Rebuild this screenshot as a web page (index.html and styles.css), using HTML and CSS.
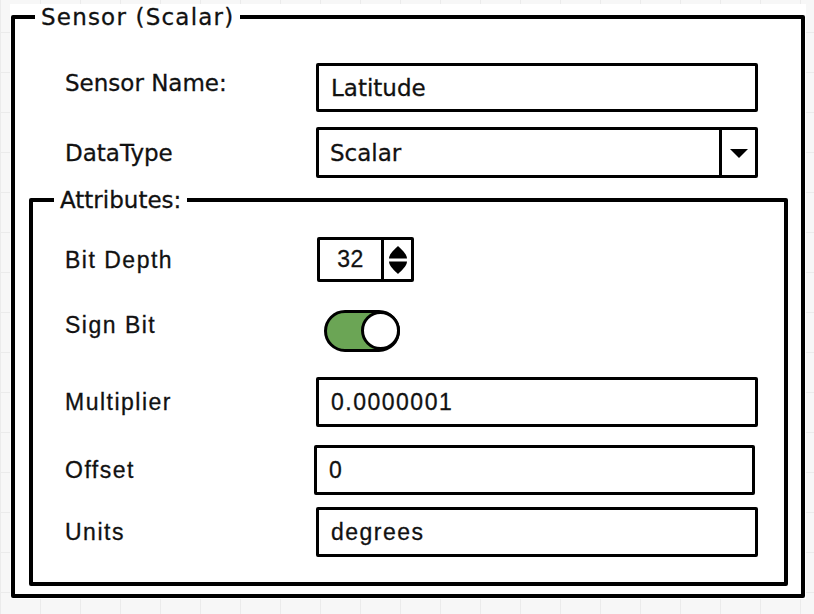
FILE: index.html
```html
<!DOCTYPE html>
<html lang="en">
<head>
  <meta charset="UTF-8" />
  <meta name="viewport" content="width=device-width, initial-scale=1" />
  <title>Sensor (Scalar)</title>
  <link rel="stylesheet" href="styles.css">
</head>
<body>

<div class="page">
  <div class="sheet">
    <fieldset class="group">
      <legend>Sensor (Scalar)</legend>

      <div class="fields">
        <div class="row name-row">
          <label class="sketch">Sensor Name:</label>
          <div class="input sketch">Latitude</div>
        </div>
        <div class="row type-row">
          <label class="sketch">DataType</label>
          <div class="select sketch">
            <span class="value">Scalar</span>
            <span class="caret"></span>
          </div>
        </div>
      </div>

      <fieldset class="group inner">
        <legend>Attributes:</legend>

        <div class="attrs">
          <div class="row spin-row">
            <label>Bit Depth</label>
            <div class="stepper">
              <span class="num">32</span>
              <span class="arrows">
                <svg width="20" height="30" viewBox="0 0 20 30">
                  <path d="M10 1 C13 4 19 9 19 13.5 L1 13.5 C1 9 7 4 10 1 Z" fill="#000"/>
                  <path d="M10 29 C13 26 19 21 19 16.5 L1 16.5 C1 21 7 26 10 29 Z" fill="#000"/>
                </svg>
              </span>
            </div>
          </div>

          <div class="row switch-row">
            <label>Sign Bit</label>
            <div class="toggle"><span class="knob"></span></div>
          </div>

          <div class="row mult-row">
            <label>Multiplier</label>
            <div class="input">0.0000001</div>
          </div>

          <div class="row offset-row">
            <label>Offset</label>
            <div class="input">0</div>
          </div>

          <div class="row units-row">
            <label>Units</label>
            <div class="input">degrees</div>
          </div>
        </div>
      </fieldset>
    </fieldset>
  </div>
</div>

</body>
</html>
```

FILE: styles.css
```css
* { box-sizing: border-box; }
html, body {
  margin: 0; padding: 0; min-height: 614px;
}
body {
  background-color: #f7f7f7;
  background-image:
    linear-gradient(#ebebeb 1px, transparent 1px),
    linear-gradient(90deg, #ebebeb 1px, transparent 1px);
  background-size: 40px 40px;
  background-position: 0 32px;
  color: #111;
  font-family: "Liberation Sans", Arial, sans-serif;
  font-size: 23px;
  letter-spacing: 1.5px;
  -webkit-text-stroke: 0.3px #111;
}
.page {
  padding: 4px 0 0 10px;
}
.sheet {
  width: 796px;
  height: 595px;
  background: #fff;
}

/* group boxes */
.group {
  margin: 0 0 0 1px;
  padding: 0;
  width: 794px;
  min-width: 0;
  border: 4px solid #000;
  border-radius: 2px;
}
.group > legend {
  margin-left: 20px;
  padding: 0 6px;
  font-family: "DejaVu Sans", sans-serif;
  font-size: 23px;
  line-height: 26px;
  letter-spacing: 1.2px;
}
.group.inner {
  width: auto;
  margin: 9px 13px 8px 14px;
}
.group.inner > legend {
  margin-left: 21px;
  letter-spacing: 0;
}

.fields {
  padding: 33px 43px 0 50px;
}
.attrs {
  padding: 24px 26px 25px 32px;
}

/* rows */
.row {
  display: grid;
  grid-template-columns: 251px 442px;
  align-items: center;
}
.row label {
  line-height: 26px;
}
.sketch {
  font-family: "DejaVu Sans", sans-serif;
  letter-spacing: 0;
}
.name-row { height: 49px; margin-bottom: 15px; }
.name-row label { align-self: start; margin-top: 7px; }
.type-row { height: 51px; }

.spin-row { height: 45px; margin-bottom: 26px; }
.switch-row { height: 45px; margin-bottom: 24px; }
.switch-row label { align-self: start; margin-top: 4px; }
.mult-row { height: 50px; margin-bottom: 18px; }
.offset-row { height: 50px; margin-bottom: 12px; }
.units-row { height: 50px; }

/* controls */
.input {
  height: 100%;
  display: flex;
  align-items: center;
  padding-left: 12px;
  border: 3px solid #000;
  border-radius: 2px;
  background: #fff;
}
.offset-row .input { margin-left: -2px; width: 441px; }

.select {
  height: 100%;
  display: flex;
  border: 3px solid #000;
  border-radius: 2px;
}
.select .value {
  flex: 1;
  display: flex;
  align-items: center;
  padding-left: 11px;
}
.select .caret {
  width: 36px;
  border-left: 3px solid #000;
  display: flex;
  align-items: center;
  justify-content: center;
}
.select .caret::after {
  content: "";
  border-left: 9px solid transparent;
  border-right: 9px solid transparent;
  border-top: 9px solid #000;
  margin-top: 2px;
}

.stepper {
  width: 97px;
  height: 45px;
  display: flex;
  margin-left: 1px;
  border: 3px solid #000;
  border-radius: 2px;
}
.stepper .num {
  width: 61px;
  display: flex;
  align-items: center;
  justify-content: center;
  letter-spacing: 0.5px;
}
.stepper .arrows {
  flex: 1;
  border-left: 3px solid #000;
  display: flex;
  align-items: center;
  justify-content: center;
}
.stepper svg { display: block; }

.toggle {
  width: 76px;
  height: 42px;
  margin-left: 8px;
  border: 3px solid #000;
  border-radius: 21px;
  background: #6ba555;
  display: flex;
  align-items: center;
  justify-content: flex-end;
}
.toggle .knob {
  width: 39px;
  height: 39px;
  margin-right: -3px;
  border: 3px solid #000;
  border-radius: 50%;
  background: #fff;
}
```
